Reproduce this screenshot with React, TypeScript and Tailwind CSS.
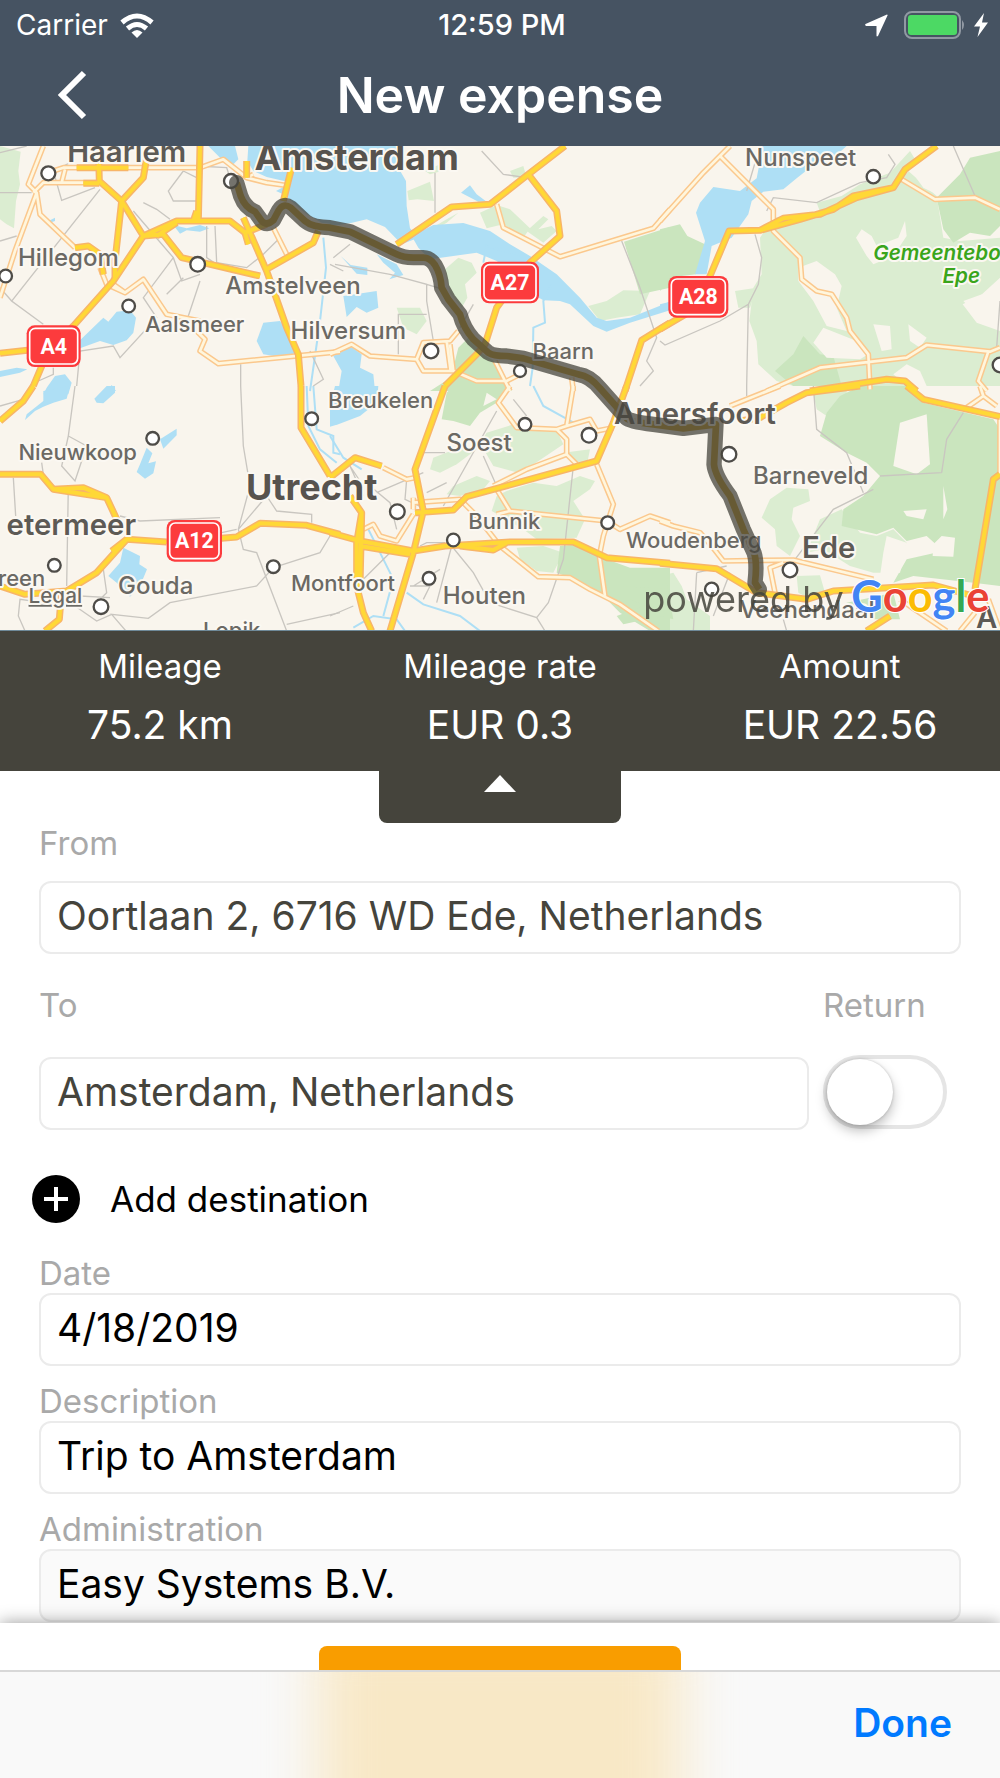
import React from "react";

type Sheet = "a" | "b" | "c" | "d" | "e" | "f";
type Shape = [Sheet, string];

// The map is drawn on six sheets, three units to a pixel.
const origin: Record<Sheet, string> = {
  a: "translate(0 0)",
  b: "translate(990 0)",
  c: "translate(1980 0)",
  d: "translate(0 735)",
  e: "translate(990 735)",
  f: "translate(1980 735)",
};

const meadow: Shape[] = [
  ["a", "M0 15L62 32L55 90L60 130L48 180L42 262L20 250L0 235Z"],
  ["b", "M232 150L300 122L312 180L262 175L236 178Z"],
  ["b", "M285 90L330 70L335 90L300 100ZM540 90L580 75L590 110L550 110Z"],
  ["b", "M450 215L500 192L540 205L600 262L580 290L520 250L470 262ZM590 270L640 225L655 235L625 265L665 255L680 270L640 305Z"],
  ["b", "M290 270L350 235L385 215L350 245L300 275Z"],
  ["b", "M345 385L385 350L425 365L440 395L405 430L412 470L395 500L360 455L352 420Z"],
  ["b", "M775 495L830 480L880 448L960 450L930 520L860 530L810 540Z"],
  ["b", "M200 500L270 500L290 540L260 580L220 560Z"],
  ["c", "M340 230L470 212L600 165L700 142L745 90L830 165L850 290L900 300L1020 290V440L910 480L960 530L1020 565V735H400L350 720L295 670L290 600L268 540L280 440L305 400L300 290Z"],
  ["c", "M470 185L545 165L600 130L690 95L750 30L765 55L735 90L700 140L600 165L480 212Z"],
  ["c", "M225 450L290 440L270 500L235 500Z"],
  ["e", "M450 170L470 140L560 112L680 132L700 175L640 215L570 262L490 240Z"],
  ["e", "M310 215L400 180L440 190L380 235L330 260L300 250Z"],
  ["e", "M370 300L440 270L480 285L460 310L390 330L350 325Z"],
  ["e", "M530 315L610 290L680 300L750 270L795 285L780 310L730 345L765 400L740 455L620 460L580 430L520 395L485 375L500 330Z"],
  ["e", "M560 485L640 480L700 500L670 560L620 555L570 520Z"],
  ["e", "M700 200L780 190L770 240L730 235Z"],
  ["f", "M0 570L40 560L65 600L80 640L150 690V735H0Z"],
  ["f", "M305 395L330 340L380 305L445 310L450 345L400 365L395 400L420 450L390 510L350 480L345 430Z"],
  ["f", "M480 400L545 370L600 440L650 450L700 430L740 470L690 560L640 560L570 540L490 490L440 500Z"],
  ["f", "M410 570L480 568L495 620L450 640L415 620Z"],
  ["f", "M460 20L560 0V60L500 90L470 70Z"],
];

const wood: Shape[] = [
  ["b", "M882 302L1020 258V440L930 460Z"],
  ["c", "M0 265L60 250L82 285L135 310L108 400L40 408L0 450Z"],
  ["b", "M385 620L415 590L460 640L500 665L545 750H300L370 705L375 660Z"],
  ["c", "M830 170L900 100L930 50L1020 30V255L990 285L930 275L880 305L850 265Z"],
  ["c", "M345 690L400 640L430 585L480 640L520 645L545 735H400Z"],
  ["e", "M335 100L350 20L370 0H535L500 50L450 80L420 120L370 105Z"],
  ["e", "M690 480L750 475L830 520L900 545L1020 545V735H960L870 680L830 640L780 610L720 575L680 560Z"],
  ["e", "M860 690L940 660L950 700L880 715Z"],
  ["f", "M500 80L540 30L600 0H740L790 50L1000 100L1020 130V600L940 590L760 570L700 590L740 520L850 495L800 450L740 465L700 425L650 445L545 420L550 370L610 330L660 270L620 230L560 200L480 150Z"],
  ["f", "M560 650L700 620L720 700L560 700ZM0 600L20 590L40 700L0 690Z"],
  ["e", "M870 600L1020 610V690L900 640Z"],
];

const clearing: Shape[] = [
  ["c", "M588 290L605 265L635 285L650 315L715 290L735 240L740 285L700 345L640 370L620 345Z"],
  ["c", "M415 380L470 360L525 400L545 435L530 500L560 570L500 555L460 480L415 420Z"],
  ["c", "M750 85L860 30L905 70L860 130L830 160L790 140Z"],
  ["c", "M908 490L960 465L1020 410V570L950 545Z"],
  ["c", "M640 550L690 555L695 625L665 630ZM745 550L800 590L780 620L750 600ZM460 605L490 560L590 600L625 640L600 655L500 650Z"],
  ["c", "M700 700L740 670L780 690L800 735H740Z"],
  ["f", "M700 240L720 110L800 85L810 235L770 265Z"],
  ["f", "M820 475L845 450L885 455L880 512L818 510ZM730 375L800 370L790 400L740 390ZM850 300L862 370L850 400Z"],
  ["f", "M680 450L740 470L720 560L660 570L670 500Z"],
  ["e", "M470 20L500 40L460 60Z"],
];

const water: Shape[] = [
  ["a", "M625 15H705L715 55L690 80L655 45ZM745 15H1020V252L965 245L920 220L885 190L850 160L828 150L875 125L800 108L760 90L742 60Z"],
  ["b", "M0 15H200L205 80L228 120L230 195L240 262L265 290L215 310L165 258L110 235L60 247L0 255Z"],
  ["b", "M245 285L310 252L400 246L480 270L540 310L600 345L680 400L750 470L800 530L830 540L900 530L1020 482V508L900 545L830 572L790 555L720 490L690 480L640 478L600 455L540 390L500 360L440 335L370 345L300 355L265 320Z"],
  ["b", "M393 155L420 133L440 160L470 182L445 182Z"],
  ["b", "M32 345L62 372L112 380L112 402L80 398ZM140 340L200 370L220 402L178 415L195 395L160 365Z"],
  ["b", "M40 465L140 450L145 500L110 515L80 498L50 528Z"],
  ["b", "M10 645L60 615L95 640L90 680L130 700L135 750H25L35 690Z"],
  ["a", "M520 252L560 262L600 252L628 262L600 272L560 268L540 278Z"],
  ["a", "M240 598L310 530L325 542L350 512L390 508L408 530L400 575L380 598L340 612L300 600L240 622Z"],
  ["a", "M790 545L840 540L880 590L895 640L840 648L790 640L770 600Z"],
  ["a", "M0 690L50 680L82 685L60 695L0 708ZM165 705L195 700L215 725L205 760L130 760L140 740ZM322 750L335 732L348 750Z"],
  ["a", "M150 238L165 230L165 240L150 245Z"],
  ["d", "M130 15L210 0L200 38L160 50L130 62L105 75L75 102L80 85L130 45ZM283 38L320 0H345V20L310 52L290 50Z"],
  ["d", "M480 160L530 128V148L490 188ZM440 185L457 202L445 232L468 226L460 262L435 278L410 258L420 235Z"],
  ["d", "M370 485L420 510L418 535L441 550L420 600L390 632L350 590L325 570L360 530Z"],
  ["e", "M0 60L15 0H145L140 50L90 90L25 115L0 122Z"],
  ["c", "M300 15H560L520 50L450 80L410 112L370 145L310 152L275 180L265 220L215 290L155 315L140 400H105L135 300L108 215L120 185L160 138L240 150L290 112L300 60Z"],
  ["c", "M0 490L30 482V505L0 512Z"],
];

const stream: Shape[] = [
  ["a", "M970 290L978 380L960 540L930 750"],
  ["b", "M460 365L470 315L580 345M665 430L640 480L645 545L610 560L608 680L600 735"],
  ["e", "M610 0L640 60L740 115M110 420L150 500L190 580L160 690M230 620L280 655L390 690L450 735M0 150L40 215L95 250M70 725L130 690L200 700L225 735"],
  ["d", "M920 0L925 120L960 190L1010 230M940 0L950 130L1000 150L1000 200L1020 205"],
];

const lane: Shape[] = [
  ["a", "M0 35L80 15M0 155H95M300 145L35 480L130 550M220 15V60L160 90L185 178L285 140M35 480L0 440"],
  ["a", "M550 90L505 150L520 180L600 180M400 210L520 350L545 420L600 400M520 350L430 470L470 530L360 650L340 615L240 630L230 735M550 410L500 460M600 420L560 540M430 185L470 205L510 235M590 75L680 80L700 140M550 90L590 110"],
  ["a", "M620 255V350L650 370M645 255L650 365L740 380L790 340L840 290M722 670V735M930 630L970 715L940 735M160 680V700L115 720M0 300L50 285"],
  ["b", "M315 95V215M455 30L520 100L590 110M875 300L930 440L980 590L950 660L970 690L930 735M10 350L60 310M15 370L180 400L290 430V480L310 600M205 640V520H290M290 430L340 445M430 490L390 560M0 370L40 390"],
  ["c", "M685 40L705 70L680 110L600 125L470 185L340 170L320 210M880 15L945 165M285 280L305 350L295 430L265 490L180 540L15 612L0 600M265 490L260 735M1020 480L1010 620M300 15L260 150"],
  ["d", "M225 0L205 150L260 180L225 285L185 240L205 150M40 275L47 390M205 300L200 600M722 0L730 180L750 300L715 430L730 490L770 500L860 735M820 545L770 600L510 650L445 697L335 685L378 735M820 545L960 500L990 450M860 715L1020 680M715 430L800 330L830 375L935 385V410M665 440L710 430M240 630L330 635M130 650L60 640L55 690L75 735M225 660L290 705L335 685M310 550L320 620L300 640M125 230L130 265M360 390L420 405L660 395M0 60L70 40"],
  ["e", "M500 75L340 360M280 200H345M730 240L700 520L655 650L620 695M460 210L500 300M365 480L320 650M365 480L430 560L480 650L620 695L645 735M550 40L590 90M120 300L180 350L200 430M140 320L280 260M230 280L225 340L290 370M100 580L180 500M250 600L330 550M280 640L300 600L240 600M0 690L70 660M290 320L350 290M270 480L290 470H345M100 300L60 240L100 330"],
  ["f", "M460 0L470 130L560 200L610 320M640 310L520 370L405 520M260 0V30M845 260L660 270M845 260L860 160L910 80M160 690L210 560M380 735L370 700M110 560L200 540M110 560L100 735"],
];

const road: Shape[] = [
  ["a", "M130 15L85 130L110 155L45 330L0 470M110 155L120 220L225 320M100 155L130 125H295M160 90L190 80H600L670 55L740 110L800 125L870 135M195 85L185 125"],
  ["a", "M300 380L320 430L375 455L430 415L500 520L600 540M375 455L340 430M590 570L615 595L600 630L655 668L1020 632M820 260L860 340M740 110L760 100"],
  ["b", "M0 640L65 610L120 645L260 655L280 605L360 600L385 570M260 655L280 690L370 690L440 720H530L570 700M350 600L362 690M360 610L370 690M495 660L540 750M725 710L730 750"],
  ["b", "M500 190L520 260L690 347L970 262L1020 205"],
  ["c", "M0 240L130 95L210 15M180 45L340 205V270L420 350L425 415L470 450L515 460L560 530L570 570L625 640L630 745M320 750L480 680L740 650L800 612L990 632L1020 620M725 115L825 175L945 170L1020 205M985 632L955 720L980 750"],
  ["e", "M160 245L230 280L255 275M540 0L505 50L560 125L680 130L710 120L730 0M680 130L710 160V205L740 235M710 120L780 100L800 135L850 125M490 300L590 250L710 205M500 310L540 375L830 405L870 430L960 390L1020 410M500 385L540 375M800 235L850 355L820 450L808 510L825 630"],
  ["e", "M250 335V370M250 350L390 340L440 390L510 480L625 572L720 575L780 610L870 655L985 735M250 385L200 465L150 450L130 415L100 430"],
  ["f", "M0 405L40 420L120 440L155 480L190 525L400 522L640 580M210 60L360 0M370 530L330 545L345 620M720 640L860 735M960 0L970 30L1010 60M970 30L920 65M900 735L945 680M985 640L1020 735M1020 100V270"],
];

const highway: Shape[] = [
  ["a", "M295 15L298 120L365 180L430 285L340 420L220 555L140 640L100 735"],
  ["a", "M440 50L430 110L365 180L345 360V410M600 15L595 240M580 240L590 210M430 285L490 280L545 350L780 405M430 285L530 240H690L735 275L800 250M470 285L530 245M250 127H298M230 80H385"],
  ["a", "M730 230L800 390L860 560L895 640L903 735M735 275L745 310M800 385L940 305L955 270M0 637L150 620M875 80L850 180M225 320L265 315L300 340L310 400M740 60V110"],
  ["d", "M100 0L70 45L0 105M903 0V125L990 270M0 265H122L160 310L320 335L355 410M160 310L250 305L320 335M0 600L75 625L200 615L290 560L380 460L500 468M335 495L380 460M665 457L710 453L780 412L920 418L1020 445M185 615L178 700L135 735"],
  ["b", "M200 310L365 198L480 190L595 100L705 15M595 100L680 210L690 285L600 365L500 500L465 610L440 640L345 735M1020 545L935 598L885 750"],
  ["c", "M0 565L110 500L150 405L207 270L300 268L370 232L480 220L590 170L700 140L735 85L830 15M300 268L420 235L520 205L580 165L700 140M450 750L680 715L735 720L770 750"],
  ["e", "M345 0L255 250L280 375L250 500L180 735M890 0L850 110L800 225L410 332L370 372L255 380M0 440L90 465L250 495L345 480L540 468H730L830 515L1020 532M90 480L240 505M390 480L490 492L530 470M60 330L95 380L80 470V600L100 680L125 735M95 380L90 600M0 275L75 215L155 240"],
  ["f", "M240 105L300 95L380 50L440 20L600 0M740 0L790 40L1020 92M0 532L170 548L290 620L440 640L520 615L820 597L940 630M1020 265L1000 280L945 610M620 735L690 690"],
];

const route =
  "M710 125L722 165Q735 200 765 212L785 240Q800 256 820 238L836 208Q850 184 872 200L915 240Q935 258 990 260L1050 272L1190 340Q1210 350 1240 350H1270Q1290 350 1305 372Q1322 400 1325 440L1345 475L1380 520Q1390 560 1420 595L1465 635Q1480 645 1520 645L1570 652L1735 700Q1770 705 1800 742L1880 832Q1890 842 1960 850L2050 862L2148 850L2142 970Q2145 1005 2190 1065L2230 1165L2262 1235Q2272 1265 2265 1325L2278 1345";

const towns: [number, number, number][] = [
  [145, 97, 21], [693, 120, 21], [17, 405, 19], [593, 370, 22], [386, 495, 19],
  [1293, 630, 22], [1560, 690, 18], [2620, 107, 20], [3000, 672, 22], [458, 892, 19],
  [935, 833, 19], [163, 1273, 19], [303, 1397, 22], [820, 1277, 19], [1575, 850, 19],
  [1767, 883, 22], [1192, 1112, 22], [1360, 1197, 19], [1823, 1145, 19], [1287, 1312, 19],
  [2187, 940, 22], [2370, 1287, 22], [2135, 1345, 20],
];

const big = "text-[108px] font-bold fill-[#57534e]";
const mid = "text-[88px] font-semibold fill-[#5d5a55]";
const plain = "text-[72px] font-medium fill-[#6b6964]";
const small = "text-[66px] font-medium fill-[#6b6964]";

// Each label is centred on its x.
const names: [string, number, number, string][] = [
  ["Haarlem", 380, 62, mid],
  ["Amsterdam", 1070, 87, big],
  ["Hillegom", 205, 375, plain],
  ["Amstelveen", 879, 460, plain],
  ["Aalsmeer", 584, 572, small],
  ["Hilversum", 1045, 595, plain],
  ["Breukelen", 1142, 802, small],
  ["Baarn", 1690, 655, small],
  ["Soest", 1437, 930, plain],
  ["Nunspeet", 2402, 75, plain],
  ["Nieuwkoop", 233, 957, small],
  ["Utrecht", 935, 1077, big],
  ["etermeer", 214, 1182, mid],
  ["reen", 65, 1335, small],
  ["Gouda", 467, 1360, plain],
  ["Lopik", 695, 1492, small],
  ["Montfoort", 1029, 1350, small],
  ["Bunnik", 1513, 1165, small],
  ["Houten", 1453, 1390, plain],
  ["Amersfoort", 2085, 848, mid],
  ["Barneveld", 2432, 1030, plain],
  ["Woudenberg", 2081, 1222, small],
  ["Ede", 2486, 1250, mid],
  ["Veenendaal", 2421, 1432, plain],
  ["A", 2960, 1460, mid],
];

const shields: [string, number, number, number][] = [
  ["A4", 80, 553, 162],
  ["A27", 1443, 362, 174],
  ["A28", 2005, 405, 180],
  ["A12", 500, 1137, 166],
];

function Shapes({ list, className }: { list: Shape[]; className: string }) {
  return (
    <g className={className}>
      {list.map(([sheet, d], i) => (
        <path key={i} d={d} transform={origin[sheet]} />
      ))}
    </g>
  );
}

function RouteMap() {
  return (
    <svg viewBox="0 15 3000 1452" className="block h-auto w-full bg-[#f9f5ed] font-['Inter',sans-serif]" role="img" aria-label="Route from Ede to Amsterdam">
      <Shapes list={meadow} className="fill-[#dbedd1]" />
      <Shapes list={wood} className="fill-[#cae5be]" />
      <Shapes list={clearing} className="fill-[#f9f5ed]" />
      <Shapes list={water} className="fill-[#aedff5]" />
      <Shapes list={stream} className="fill-none stroke-[#aedff5] stroke-[6]" />
      <Shapes list={lane} className="fill-none stroke-[#c9c6c0] stroke-[4]" />
      <g strokeLinejoin="round">
        <Shapes list={road} className="fill-none stroke-[#fbc88d] stroke-[17]" />
        <Shapes list={road} className="fill-none stroke-[#fff6dd] stroke-[8]" />
        <Shapes list={highway} className="fill-none stroke-[#f8b568] stroke-[21]" />
        <Shapes list={highway} className="fill-none stroke-[#ffd836] stroke-[12]" />
        <path d={route} className="fill-none stroke-[#c99a1c] stroke-[20]" />
      </g>
      <g className="fill-white stroke-[#4e4c48] stroke-[7]">
        {towns.map(([cx, cy, r], i) => (
          <circle key={i} cx={cx} cy={cy} r={r} />
        ))}
      </g>
      <g textAnchor="middle" strokeLinejoin="round" className="stroke-[#fbf8f2] stroke-[12] [paint-order:stroke]">
        {names.map(([name, x, y, style]) => (
          <text key={name} x={x} y={y} className={style}>{name}</text>
        ))}
        <text x={2828} y={357} className="fill-[#3aa51c] text-[62px] font-semibold italic">Gemeentebos</text>
        <text x={2884} y={425} className="fill-[#3aa51c] text-[62px] font-semibold italic">Epe</text>
        <text x={166} y={1385} className="fill-[#6b6964] text-[62px] font-medium underline">Legal</text>
      </g>
      <path d={route} strokeLinejoin="round" strokeLinecap="round" className="fill-none stroke-[#45443c] stroke-[46] opacity-75" />
      {shields.map(([code, x, y, w]) => (
        <g key={code}>
          <rect x={x} y={y} width={w} height={125} rx={24} className="fill-[#fc3b3d]" />
          <rect x={x + 9} y={y + 9} width={w - 18} height={107} rx={17} className="fill-none stroke-white stroke-[5]" />
          <text x={x + w / 2} y={y + 85} textAnchor="middle" className="fill-white font-['Roboto',sans-serif] text-[64px] font-bold">{code}</text>
        </g>
      ))}
      <text x={1930} y={1413} className="fill-[#45443c] text-[108px] opacity-85">powered by</text>
      <text x={2554} y={1413} className="stroke-white stroke-[6] font-['Lato',sans-serif] text-[130px] font-bold [paint-order:stroke]">
        <tspan className="fill-[#4285f4]">G</tspan>
        <tspan className="fill-[#ea4335]">o</tspan>
        <tspan className="fill-[#fbbc05]">o</tspan>
        <tspan className="fill-[#4285f4]">g</tspan>
        <tspan className="fill-[#34a853]">l</tspan>
        <tspan className="fill-[#ea4335]">e</tspan>
      </text>
    </svg>
  );
}

function StatusBar() {
  return (
    <div className="grid h-[50px] grid-cols-3 items-center pr-3 pl-4 text-[28px] leading-[50px]">
      <div className="flex items-center gap-3">
        <span>Carrier</span>
        <svg viewBox="0 0 34 25" className="h-[25px] w-[34px] fill-none stroke-white stroke-[5]" aria-label="Wi-Fi">
          <path d="M2 9.500Q17 -3.500 32 9.500" />
          <path d="M7.500 15.500Q17 7.500 26.500 15.500" />
          <path d="M17 25L11.500 19.500Q17 14.500 22.500 19.500Z" className="fill-white stroke-none" />
        </svg>
      </div>
      <div className="text-center text-[29px] font-medium">12:59 PM</div>
      <div className="flex items-center justify-end">
        <svg viewBox="0 0 23 23" className="mr-4 h-[23px] w-[23px] fill-white" aria-label="Location">
          <path d="M0.500 10L22 0.500Q23 0.500 22.500 1.500L13 22Q11.500 23 11.500 21.500V12H1Q-0.500 11 0.500 10Z" />
        </svg>
        <svg viewBox="0 0 62 28" className="h-[28px] w-[62px]" aria-label="Battery charging">
          <rect x="1" y="1" width="55" height="26" rx="7" className="fill-none stroke-[#9199a3] stroke-2" />
          <rect x="4" y="4" width="49" height="20" rx="3" className="fill-[#4cd964]" />
          <path d="M58 9Q62 14 58 19Z" className="fill-[#9199a3]" />
        </svg>
        <svg viewBox="0 0 14 24" className="ml-2 h-[24px] w-[14px] fill-white" aria-hidden="true">
          <path d="M10 0L0 13.500H6L3.500 24L14 9.500H8Z" />
        </svg>
      </div>
    </div>
  );
}

const summary = [
  ["Mileage", "75.2 km"],
  ["Mileage rate", "EUR 0.3"],
  ["Amount", "EUR 22.56"],
];

const label = "block text-[33px] leading-10 text-[#a9a9a9]";
const box = "block h-[73px] w-full rounded-xl border-2 border-[#ebebeb] px-4 pb-1 text-[39px] outline-none";

export default function App() {
  return (
    <div className="flex min-h-screen flex-col bg-white font-['Inter',sans-serif] text-black">
      <header className="bg-[#465362] text-white">
        <StatusBar />
        <div className="grid h-24 grid-cols-[1fr_auto_1fr] items-center px-14 pb-1.5">
          <button type="button" aria-label="Back" className="w-8">
            <svg viewBox="0 0 32 50" className="h-[50px] w-[32px] fill-none stroke-white stroke-[6]">
              <path d="M28 3L6 25L28 47" />
            </svg>
          </button>
          <h1 className="text-[50px] leading-[60px] font-semibold">New expense</h1>
        </div>
      </header>

      <RouteMap />

      <dl className="grid h-[141px] grid-cols-[8fr_9fr_8fr] border-t border-[#6f8a99] bg-[#45443c] pt-3 text-center text-white">
        {summary.map(([term, value]) => (
          <div key={term}>
            <dt className="text-[33px] leading-[46px]">{term}</dt>
            <dd className="mt-1.5 text-[39px] leading-[60px]">{value}</dd>
          </div>
        ))}
      </dl>
      <button type="button" aria-label="Collapse map" className="mx-auto flex h-[52px] w-[242px] justify-center rounded-b-lg bg-[#45443c] pt-1">
        <svg viewBox="0 0 32 17" className="h-[17px] w-[32px] fill-white">
          <path d="M16 0L32 17H0Z" />
        </svg>
      </button>

      <form className="px-[39px]">
        <label htmlFor="from" className={label}>From</label>
        <input id="from" className={box + " mt-[18px] bg-white text-[#45443c]"} defaultValue="Oortlaan 2, 6716 WD Ede, Netherlands" />

        <div className="mt-[31px] grid grid-cols-[1fr_138px] gap-x-3.5">
          <label htmlFor="to" className={label}>To</label>
          <label htmlFor="return" className={label}>Return</label>
          <input id="to" className={box + " mt-8 bg-white text-[#45443c]"} defaultValue="Amsterdam, Netherlands" />
          <input
            id="return"
            type="checkbox"
            role="switch"
            className="mt-[30px] flex h-[74px] w-[124px] appearance-none items-center rounded-full border-4 border-[#e5e5e5] bg-white before:h-[66px] before:w-[66px] before:rounded-full before:bg-white before:shadow-[0_6px_12px_rgba(0,0,0,0.25),0_0_3px_rgba(0,0,0,0.2)] checked:justify-end checked:bg-[#4cd964]"
          />
        </div>

        <button type="button" className="mt-[45px] -ml-[7px] flex h-12 items-center gap-[30px] text-[35px] leading-[48px]">
          <svg viewBox="0 0 48 48" className="h-12 w-12 stroke-white stroke-[4]" aria-hidden="true">
            <circle cx="24" cy="24" r="24" className="fill-black stroke-none" />
            <path d="M24 12V36M12 24H36" />
          </svg>
          Add destination
        </button>

        <label htmlFor="date" className={label + " mt-[30px]"}>Date</label>
        <input id="date" className={box + " bg-white"} defaultValue="4/18/2019" />
        <label htmlFor="description" className={label + " mt-[15px]"}>Description</label>
        <input id="description" className={box + " bg-white"} defaultValue="Trip to Amsterdam" />
        <label htmlFor="administration" className={label + " mt-[15px]"}>Administration</label>
        <input id="administration" className={box + " bg-[#fafafa]"} defaultValue="Easy Systems B.V." readOnly />
      </form>

      <footer className="relative mt-auto bg-white pt-[23px] shadow-[0_0_16px_rgba(0,0,0,0.4)]">
        <button type="button" aria-label="Save" className="mx-auto block h-6 w-[362px] rounded-t-lg bg-[#f99d00]" />
        <div className="relative flex h-27 items-center justify-end overflow-hidden border-t-2 border-[#d8d8d8] bg-[#f9f9f9] px-12 pb-1">
          <div className="absolute -top-12 left-1/2 h-60 w-[362px] -translate-x-1/2 bg-[#f8e8c6] blur-[28px]" />
          <button type="button" className="relative text-[39px] leading-[48px] font-semibold text-[#007aff]">Done</button>
        </div>
      </footer>
    </div>
  );
}
